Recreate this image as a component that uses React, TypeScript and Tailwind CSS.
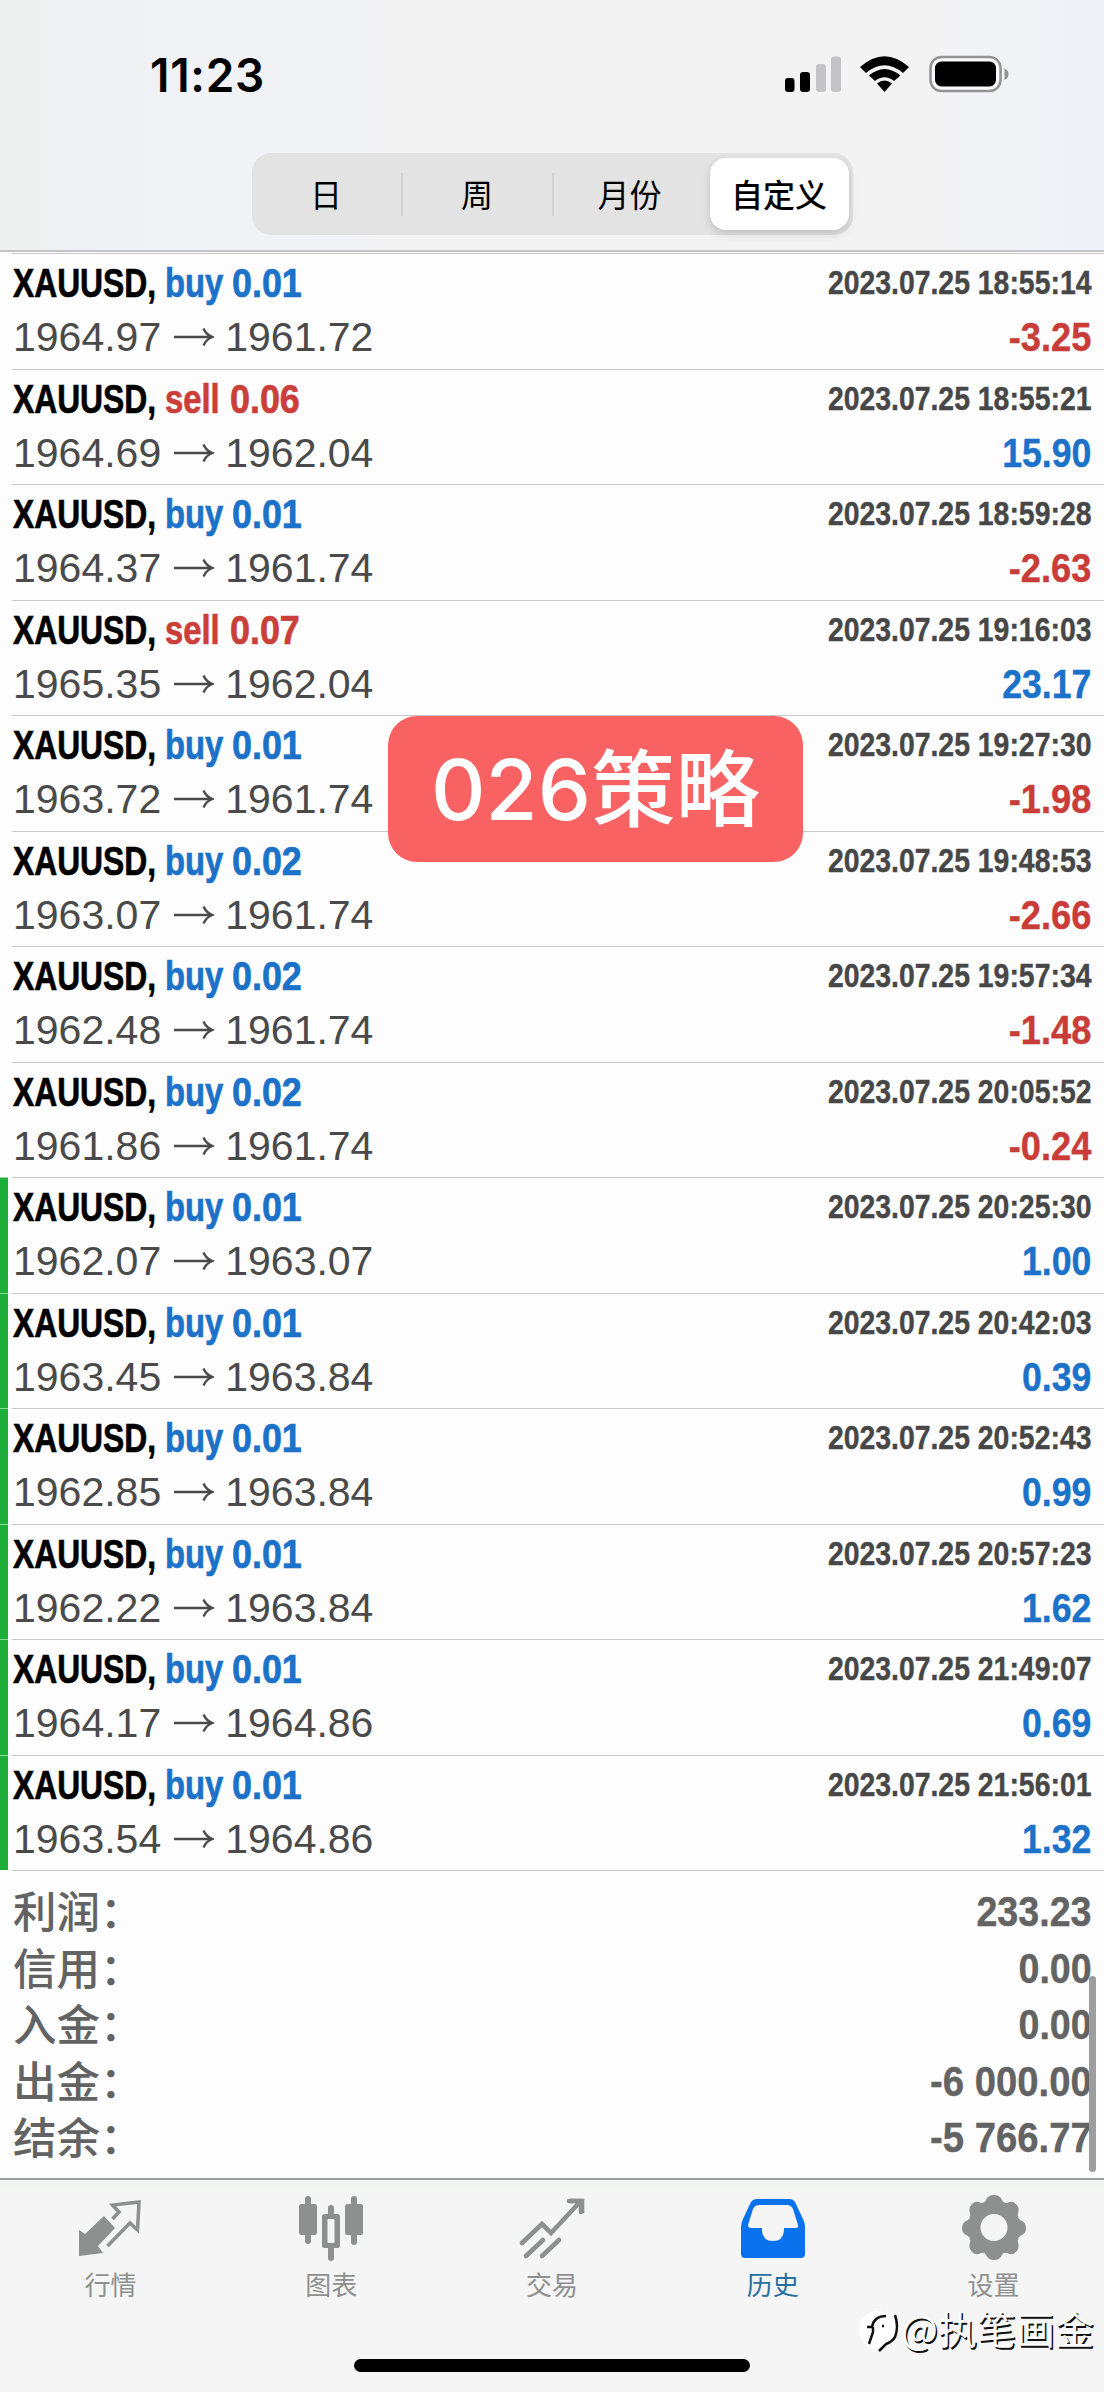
import React from "react";

type Trade = {
  side: "buy" | "sell";
  volume: string;
  open: string;
  close: string;
  time: string;
  profit: string;
  marked?: boolean;
};

const trades: Trade[] = [
  { side: "buy", volume: "0.01", open: "1964.97", close: "1961.72", time: "18:55:14", profit: "-3.25" },
  { side: "sell", volume: "0.06", open: "1964.69", close: "1962.04", time: "18:55:21", profit: "15.90" },
  { side: "buy", volume: "0.01", open: "1964.37", close: "1961.74", time: "18:59:28", profit: "-2.63" },
  { side: "sell", volume: "0.07", open: "1965.35", close: "1962.04", time: "19:16:03", profit: "23.17" },
  { side: "buy", volume: "0.01", open: "1963.72", close: "1961.74", time: "19:27:30", profit: "-1.98" },
  { side: "buy", volume: "0.02", open: "1963.07", close: "1961.74", time: "19:48:53", profit: "-2.66" },
  { side: "buy", volume: "0.02", open: "1962.48", close: "1961.74", time: "19:57:34", profit: "-1.48" },
  { side: "buy", volume: "0.02", open: "1961.86", close: "1961.74", time: "20:05:52", profit: "-0.24" },
  { side: "buy", volume: "0.01", open: "1962.07", close: "1963.07", time: "20:25:30", profit: "1.00", marked: true },
  { side: "buy", volume: "0.01", open: "1963.45", close: "1963.84", time: "20:42:03", profit: "0.39", marked: true },
  { side: "buy", volume: "0.01", open: "1962.85", close: "1963.84", time: "20:52:43", profit: "0.99", marked: true },
  { side: "buy", volume: "0.01", open: "1962.22", close: "1963.84", time: "20:57:23", profit: "1.62", marked: true },
  { side: "buy", volume: "0.01", open: "1964.17", close: "1964.86", time: "21:49:07", profit: "0.69", marked: true },
  { side: "buy", volume: "0.01", open: "1963.54", close: "1964.86", time: "21:56:01", profit: "1.32", marked: true },
];

const summary = [
  ["利润", "233.23"],
  ["信用", "0.00"],
  ["入金", "0.00"],
  ["出金", "-6 000.00"],
  ["结余", "-5 766.77"],
];

function StatusBar() {
  return (
    <div className="flex h-[148px] items-start justify-between pl-[150px] pr-[95px] pt-[50px]">
      <div className="font-['Inter'] text-[46px] font-semibold leading-[50px] tracking-[0.7px] text-black">11:23</div>
      <svg className="mt-[4px]" width="226" height="40" viewBox="782 54 226 40">
        <rect x="784" y="78" width="9.5" height="14" rx="3" fill="#000" />
        <rect x="799" y="72" width="10" height="20" rx="3" fill="#000" />
        <rect x="815" y="64" width="10" height="28" rx="3" fill="#c4c4c6" />
        <rect x="830" y="56.500" width="10" height="35.500" rx="3" fill="#c4c4c6" />
        <path d="M859 67 Q883.500 45.500 908 67 L902 73 Q883.500 57.500 865 73 Z" fill="#000" />
        <path d="M868 75.500 Q883.500 62.500 899.500 75.500 L893 81 Q883.500 73.500 874 81 Z" fill="#000" />
        <path d="M876 83.500 Q883.500 77.500 891 83.500 L883.500 92 Z" fill="#000" />
        <rect x="929.500" y="57" width="70" height="34" rx="11" fill="#fafafa" stroke="#939395" strokeWidth="2.500" />
        <rect x="934" y="61.500" width="61" height="25" rx="6.500" fill="#000" />
        <path d="M1003.500 68.500 Q1007.500 70 1007.500 74 Q1007.500 78.500 1003.500 80 Z" fill="#939395" />
      </svg>
    </div>
  );
}

function Segments() {
  return (
    <div className="mx-auto mt-[5px] flex h-[82px] w-[601px] items-center rounded-[19px] bg-[#e3e3e4] font-['Noto_Sans_CJK_SC',sans-serif] text-[32px] text-black">
      <div className="w-[149px] pb-[3px] text-center">日</div>
      <div className="h-[43px] w-[2px] bg-[#d2d2d4]" />
      <div className="w-[149px] pb-[3px] text-center">周</div>
      <div className="h-[43px] w-[2px] bg-[#d2d2d4]" />
      <div className="w-[156px] pb-[3px] pr-[4px] text-center">月份</div>
      <div className="flex h-[72px] w-[139px] items-center justify-center rounded-[16px] bg-white pb-[3px] font-medium shadow-[0_4px_8px_rgba(0,0,0,0.15)]">
        自定义
      </div>
    </div>
  );
}

function Arrow() {
  return (
    <svg className="ml-[13px] mr-[11px] mt-[16px]" width="40" height="22" viewBox="0 0 40 22" fill="none" stroke="#4a4a4a" strokeWidth="2.400">
      <path d="M0 11 H38 M29.500 2.500 Q32 8.500 38.500 11 Q32 13.500 29.500 19.500" />
    </svg>
  );
}

function TradeRow({ t }: { t: Trade }) {
  const loss = t.profit.startsWith("-");
  const sideColor = t.side === "buy" ? "text-[#1b72c8]" : "text-[#cb3f3b]";
  const profitStyle = loss ? "scale-x-[0.885] text-[#c93c38]" : "scale-x-[0.87] text-[#1b72c8]";
  return (
    <div className="flex h-[115.5px]">
      <div className={t.marked ? "w-[8px] border-t border-[#8fdc9b] bg-[#1cae39]" : "w-[8px]"} />
      <div className="ml-[4px] flex flex-1 justify-between border-t border-[#c8c8c8] pl-px pr-[12.5px] pt-[4px]">
        <div>
          <div className="-mt-px flex h-[53px] text-[41px] font-bold leading-[52px] [-webkit-text-stroke:0.7px]">
            <div className="w-[152px] origin-left scale-x-[0.775] whitespace-nowrap text-black">XAUUSD,</div>
            <div className={"w-[67px] origin-left scale-x-[0.8] whitespace-nowrap " + sideColor}>{t.side}</div>
            <div className={(t.side === "buy" ? "" : "-ml-[2px] ") + "origin-left scale-x-[0.875] whitespace-nowrap " + sideColor}>
              {t.volume}
            </div>
          </div>
          <div className="flex h-[54px] text-[41px] leading-[54px] text-[#4a4a4a]">
            <div>{t.open}</div>
            <Arrow />
            <div>{t.close}</div>
          </div>
        </div>
        <div className="text-right font-bold [-webkit-text-stroke:0.4px]">
          <div className="h-[52px] origin-right scale-x-[0.86] whitespace-nowrap text-[33px] leading-[50px] text-[#474747]">
            2023.07.25 {t.time}
          </div>
          <div className={"origin-right text-[41px] leading-[54px] " + profitStyle}>{t.profit}</div>
        </div>
      </div>
    </div>
  );
}

function Tab({ label, active, children }: { label: string; active?: boolean; children: React.ReactNode }) {
  return (
    <div className="flex flex-1 flex-col items-center pt-[14px]">
      <svg width="68" height="68" viewBox="0 0 68 68">
        {children}
      </svg>
      <div className={"mt-[3px] font-['Noto_Sans_CJK_SC',sans-serif] text-[26px] leading-[38px] " + (active ? "text-[#276f9f]" : "text-[#8e908f]")}>
        {label}
      </div>
    </div>
  );
}

const GEAR =
  "M26 6 Q28 1 34 1 Q40 1 42 6 Q43 9 47 9 Q52 6 56 10 Q60 14 58 19 Q57 24 60 26 Q66 28 66 34 Q66 40 60 42 Q57 44 58 49 Q60 54 56 58 Q52 62 47 59 Q43 58 42 61 Q40 66 34 66 Q28 66 26 61 Q25 58 21 59 Q16 62 12 58 Q8 54 10 49 Q11 44 8 42 Q2 40 2 34 Q2 28 8 26 Q11 24 10 19 Q8 14 12 10 Q16 6 21 9 Q25 9 26 6 Z M34 20 A13.500 13.500 0 1 0 34 47 A13.500 13.500 0 1 0 34 20 Z";

function TabBar() {
  return (
    <div className="flex h-[144px]">
      <Tab label="行情">
        <path d="M3 36 L9 40 L28 22 L39 34 L22 52 L27 59 L3 62 Z" fill="#8e908f" />
        <path d="M36.500 25 L43 18 L36.500 11 L63 8 L61.500 36 L54 29 L31.500 52" fill="none" stroke="#8e908f" strokeWidth="3.500" />
      </Tab>
      <Tab label="图表">
        <g fill="#8e908f">
          <rect x="2" y="10" width="18" height="31" rx="2.500" />
          <rect x="8" y="2" width="6" height="48" rx="3" />
          <rect x="48" y="10" width="18" height="31" rx="2.500" />
          <rect x="54" y="2" width="6" height="49" rx="3" />
          <rect x="31" y="11" width="6" height="56" rx="3" />
          <rect x="25" y="20" width="18" height="34" rx="2.500" />
        </g>
        <rect x="30.500" y="25" width="7" height="24" rx="1" fill="#f5f5f5" />
      </Tab>
      <Tab label="交易">
        <g fill="none" stroke="#8e908f" strokeWidth="4.600" strokeLinecap="round">
          <path d="M4 49 L24 30 L33 39 L61 9" />
          <path d="M8 62 L25 46 M24 62 L41 46" />
          <path d="M52 7 H64 V19" strokeLinecap="butt" />
          <path d="M51 7 H63 V18" />
        </g>
      </Tab>
      <Tab label="历史" active>
        <path
          fillRule="evenodd"
          fill="#0b72ed"
          d="M18 5 H50 Q55 5 57 10 L64 25 Q66 29 66 33 V60 Q66 64 62 64 H6 Q2 64 2 60 V33 Q2 29 4 25 L11 10 Q13 5 18 5 Z M20 11 Q16 11 14 15 L9 31 Q9 34 12 34 H23 V37 Q24 47 34 47 Q44 47 45 37 V34 H57 Q60 34 59 31 L54 15 Q52 11 48 11 Z"
        />
      </Tab>
      <Tab label="设置">
        <path d={GEAR} fill="#8e908f" fillRule="evenodd" />
      </Tab>
    </div>
  );
}

export default function App() {
  return (
    <div className="relative flex h-[2392px] w-[1104px] flex-col overflow-hidden bg-[#fdfdfd] font-['Liberation_Sans',Arial,sans-serif]">
      <div className="h-[252px] border-b-2 border-[#c4c4c6] bg-[#f2f2f3] bg-[linear-gradient(90deg,#eef0ef_0%,#f0f2f6_18%,#f3f3f4_35%,#f3f3f4_85%,#eff1f7_100%)]">
        <StatusBar />
        <Segments />
      </div>

      <div className="pt-px">
        {trades.map((t) => (
          <TradeRow key={t.time} t={t} />
        ))}
      </div>

      <div className="ml-[12px] h-[307.500px] border-t border-[#c8c8c8] pl-px pr-[12px] pt-[12px] font-bold text-[#636363]">
        {summary.map(([label, value]) => (
          <div key={label} className="flex h-[56.5px] items-center justify-between leading-[56px]">
            <div className="pb-[3px] font-['Noto_Sans_CJK_SC',sans-serif] text-[43.5px] font-medium leading-[53px]">{label}：</div>
            <div
              className={
                "origin-right whitespace-nowrap text-[43px] [-webkit-text-stroke:0.4px] " +
                (value.startsWith("-") ? "scale-x-[0.89]" : "scale-x-[0.875]")
              }
            >
              {value}
            </div>
          </div>
        ))}
      </div>

      <div className="flex-1 border-t-2 border-[#98a09b] bg-[linear-gradient(180deg,#f1f4f1_0px,#f5f5f5_22px)]">
        <TabBar />
        <div className="mx-auto mt-[35px] h-[13px] w-[396px] rounded-full bg-black" />
      </div>

      {/* Scroll indicator */}
      <div className="absolute left-[1089px] top-[1976px] h-[196px] w-[7px] rounded-full bg-[#9d9d9d]" />

      {/* Strategy label over the list */}
      <div className="absolute left-[388px] top-[716px] flex h-[146px] w-[415px] items-center justify-center rounded-[29px] bg-[#f86263] font-['Inter','Noto_Sans_CJK_SC',sans-serif] text-[84.5px] font-medium leading-none text-white">
        026策略
      </div>

      {/* Author mark */}
      <div className="absolute left-[859px] top-[2296px] flex items-center whitespace-nowrap">
        <svg className="mt-[9px]" width="42" height="52" viewBox="0 0 42 52" fill="none">
          <circle cx="19" cy="25" r="19" fill="#fff" />
          <path d="M8 22 H13 Q15 11 27 11 M14 22 V27 L10 39 M23 21 H25 M36 10 Q40 22 36 32 Q33 37 27 39 L20 46" stroke="#111" strokeWidth="2.500" />
        </svg>
        <div className="font-['Noto_Sans_CJK_SC',sans-serif] text-[39px] leading-[52px] text-[#fafafa] [text-shadow:1.5px_1.5px_0.5px_#111]">
          @执笔画金
        </div>
      </div>
    </div>
  );
}
